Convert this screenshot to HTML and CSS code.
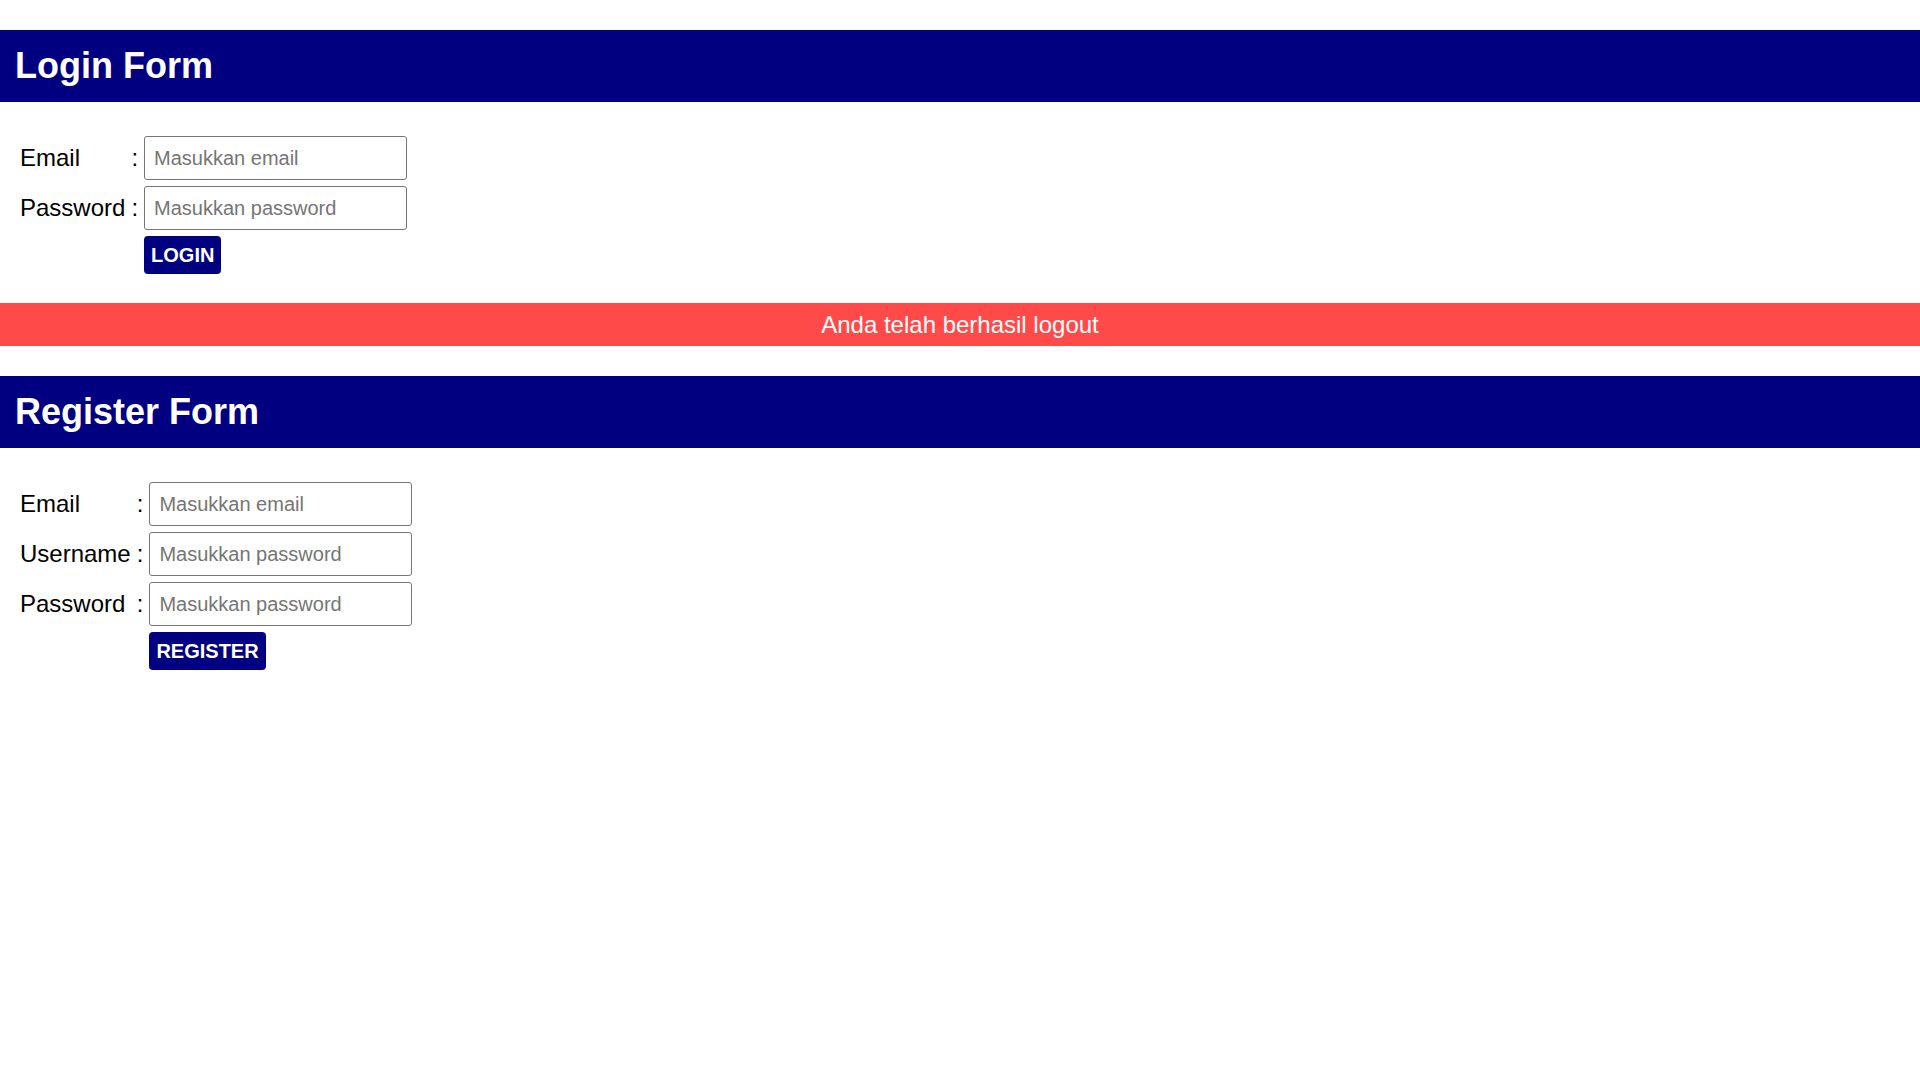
FILE: index.html
```html
<!DOCTYPE html>
<html lang="id">
<head>
<meta charset="utf-8">
<title>Login</title>
<link rel="stylesheet" href="styles.css">
</head>
<body>
  <h1 class="bar-title">Login Form</h1>
  <form class="form">
    <label class="lbl" for="le">Email</label><span class="colon">:</span><input class="field" id="le" type="email" placeholder="Masukkan email">
    <label class="lbl" for="lp">Password</label><span class="colon">:</span><input class="field" id="lp" type="password" placeholder="Masukkan password">
    <span></span><span></span><div class="btn-cell"><button class="btn" type="button">LOGIN</button></div>
  </form>
  <div class="alert">Anda telah berhasil logout</div>
  <h1 class="bar-title">Register Form</h1>
  <form class="form">
    <label class="lbl" for="re">Email</label><span class="colon">:</span><input class="field" id="re" type="email" placeholder="Masukkan email">
    <label class="lbl" for="ru">Username</label><span class="colon">:</span><input class="field" id="ru" type="text" placeholder="Masukkan password">
    <label class="lbl" for="rp">Password</label><span class="colon">:</span><input class="field" id="rp" type="password" placeholder="Masukkan password">
    <span></span><span></span><div class="btn-cell"><button class="btn" type="button">REGISTER</button></div>
  </form>
</body>
</html>
```
FILE: styles.css
```css
html, body {
  margin: 0;
  padding: 0;
  background: #ffffff;
  font-family: "Liberation Sans", Arial, sans-serif;
}
body {
  padding-top: 30px;
}
.bar-title {
  margin: 0;
  background: #000080;
  color: #ffffff;
  font-size: 36px;
  font-weight: bold;
  line-height: 72px;
  height: 72px;
  padding: 0 15px;
}
.form {
  display: grid;
  grid-template-columns: max-content max-content 263px;
  column-gap: 6px;
  row-gap: 6px;
  align-items: center;
  padding-left: 20px;
  margin: 34px 0 29px;
}
.lbl, .colon {
  font-size: 24px;
  color: #000000;
}
.field {
  box-sizing: border-box;
  width: 263px;
  height: 44px;
  margin: 0;
  border: 1px solid #767676;
  border-radius: 3px;
  padding: 0 9px;
  font-family: "Liberation Sans", Arial, sans-serif;
  font-size: 20px;
  color: #000;
}
.field::placeholder {
  color: #757575;
}
.btn-cell {
  display: flex;
}
.btn {
  box-sizing: border-box;
  height: 38px;
  padding: 0 7px;
  border: none;
  border-radius: 4px;
  background: #000080;
  color: #ffffff;
  font-family: "Liberation Sans", Arial, sans-serif;
  font-size: 20px;
  font-weight: bold;
}
.alert {
  background: #ff4a4a;
  color: #ffffff;
  text-align: center;
  font-size: 24px;
  height: 43px;
  line-height: 43px;
  margin-bottom: 30px;
}
```
